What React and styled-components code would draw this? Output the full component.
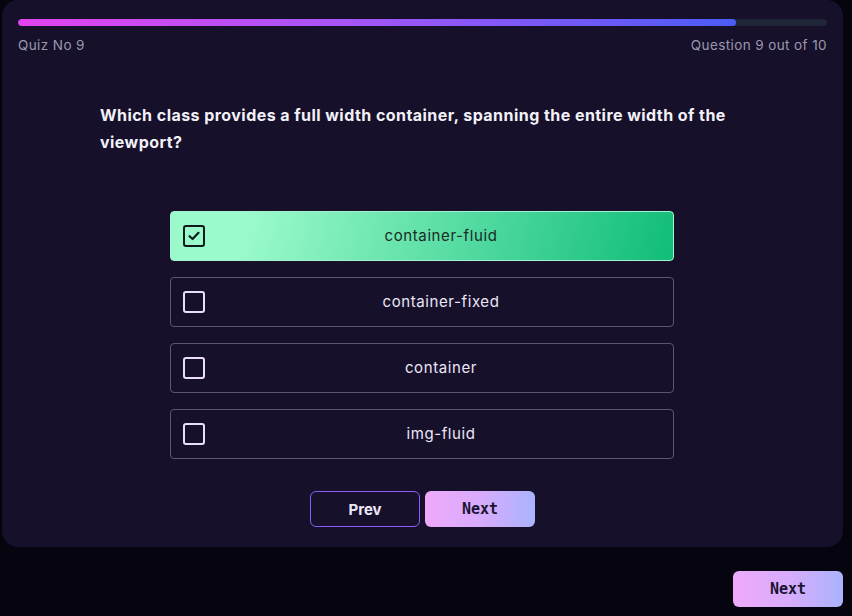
import React from "react";
import styled, { createGlobalStyle } from "styled-components";

const Global = createGlobalStyle`
  html, body { margin: 0; padding: 0; background: #05040f; }
  body { font-family: Inter, "Liberation Sans", sans-serif; }
`;

const Page = styled.div`
  padding: 0 9px 0 2px;
  display: flex;
  flex-direction: column;
`;

const Card = styled.div`
  background: #16102b;
  border-radius: 16px;
  padding: 19px 16px 20px;
`;

const Track = styled.div`
  height: 7px;
  border-radius: 4px;
  background: #1f2638;
  overflow: hidden;
`;

const Fill = styled.div`
  height: 100%;
  border-radius: 4px;
  background: linear-gradient(90deg, #e343f0 0%, #a855f7 45%, #4c5cf6 100%);
`;

const Meta = styled.div`
  display: flex;
  justify-content: space-between;
  margin-top: 11px;
  font-size: 13.5px;
  color: #9b98ad;
  letter-spacing: 0.4px;
`;

const Question = styled.h2`
  margin: 49px 0 0 82px;
  width: 660px;
  font-size: 16px;
  line-height: 27px;
  font-weight: 700;
  letter-spacing: 0.45px;
  color: #f3f1f8;
`;

const Options = styled.div`
  width: 504px;
  margin: 55px 0 0 152px;
  display: flex;
  flex-direction: column;
  gap: 16px;
`;

const Option = styled.div`
  height: 50px;
  box-sizing: border-box;
  border-radius: 4px;
  border: 1px solid ${(p) => (p.$selected ? "#a7f3d0" : "#5d5776")};
  background: ${(p) =>
    p.$selected ? "linear-gradient(105deg, #9bfacb 15%, #10bd78 100%)" : "transparent"};
  display: flex;
  align-items: center;
  padding: 0 12px;
`;

const Box = styled.div`
  width: 22px;
  height: 22px;
  box-sizing: border-box;
  border-radius: 3px;
  border: 2.5px solid ${(p) => (p.$selected ? "#0f1a1a" : "#ecdcff")};
  display: flex;
  align-items: center;
  justify-content: center;
  flex-shrink: 0;
`;

const Label = styled.span`
  flex: 1;
  text-align: center;
  font-size: 15px;
  letter-spacing: 0.6px;
  padding-left: 16px;
  margin-top: -2px;
  color: ${(p) => (p.$selected ? "#1a2a26" : "#ece6f6")};
`;

const Nav = styled.div`
  display: flex;
  justify-content: center;
  gap: 5px;
  margin-top: 32px;
`;

const Button = styled.button`
  width: 110px;
  height: 36px;
  border-radius: 6px;
  font-size: 15px;
  font-weight: 700;
  cursor: pointer;
  border: ${(p) => (p.$ghost ? "1px solid #8b5cf6" : "none")};
  background: ${(p) =>
    p.$ghost ? "transparent" : "linear-gradient(90deg, #efa9fb 0%, #d8acfc 50%, #aab3fd 100%)"};
  color: ${(p) => (p.$ghost ? "#ece6f6" : "#1a1530")};
  font-family: ${(p) =>
    p.$ghost ? 'Inter, "Liberation Sans", sans-serif' : '"DejaVu Sans Mono", monospace'};
`;

const Footer = styled.div`
  display: flex;
  justify-content: flex-end;
  margin-top: 24px;
`;

const options = ["container-fluid", "container-fixed", "container", "img-fluid"];

export default function App() {
  return (
    <Page>
      <Global />
      <Card>
        <Track>
          <Fill style={{ width: `${(9 / 10) * 100 - 1.2}%` }} />
        </Track>
        <Meta>
          <span>Quiz No 9</span>
          <span>Question 9 out of 10</span>
        </Meta>
        <Question>
          Which class provides a full width container, spanning the entire width of the viewport?
        </Question>
        <Options>
          {options.map((o, i) => (
            <Option key={o} $selected={i === 0}>
              <Box $selected={i === 0}>
                {i === 0 && (
                  <svg width="14" height="14" viewBox="0 0 14 14">
                    <path d="M2.5 7.2 L5.6 10 L11.5 3.8" fill="none" stroke="#0f1a1a" strokeWidth="2.2" strokeLinecap="round" strokeLinejoin="round" />
                  </svg>
                )}
              </Box>
              <Label $selected={i === 0}>{o}</Label>
            </Option>
          ))}
        </Options>
        <Nav>
          <Button $ghost>Prev</Button>
          <Button>Next</Button>
        </Nav>
      </Card>
      <Footer>
        <Button>Next</Button>
      </Footer>
    </Page>
  );
}
